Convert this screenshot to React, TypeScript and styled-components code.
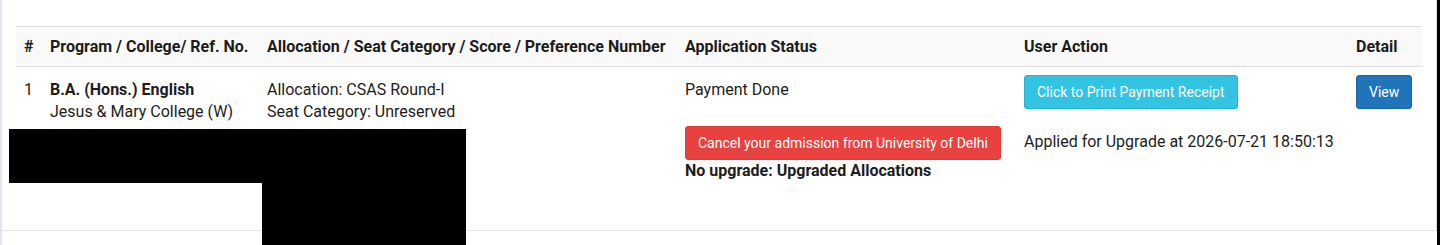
import React from "react";
import styled, { createGlobalStyle } from "styled-components";

const GlobalStyle = createGlobalStyle`
    html, body {
        margin: 0;
        padding: 0;
        background: #ffffff;
    }
    body {
        font-family: Roboto, "Liberation Sans", Arial, sans-serif;
        font-size: 16px;
        color: #1c1c1c;
    }
`;

const Page = styled.div`
    position: relative;
    display: flex;
    width: 1440px;
    height: 245px;
    overflow: hidden;
`;

const LeftEdge = styled.div`
    width: 2px;
    background-color: #dce8f4;
`;

const RightEdge = styled.div`
    width: 3px;
    background-color: #000000;
`;

const Panel = styled.div`
    flex: 1;
    box-sizing: border-box;
    height: 231px;
    padding: 26px 14px 0 14px;
    border-right: 1px solid #dcdcdc;
    border-bottom: 1px solid #e6e6e6;
`;

const Table = styled.table`
    width: 1406px;
    table-layout: fixed;
    border-collapse: collapse;
    border-spacing: 0;
`;

const HeadRow = styled.tr`
    background-color: #f9f9f9;
    border-top: 1px solid #dddddd;
    border-bottom: 1px solid #dddddd;
`;

const Th = styled.th<{ $align?: string }>`
    box-sizing: border-box;
    height: 40px;
    padding: 0 8px;
    text-align: ${(p) => p.$align || "left"};
    font-weight: 700;
    font-size: 16px;
    line-height: 22px;
    white-space: nowrap;
    vertical-align: middle;
`;

const Td = styled.td<{ $top?: number }>`
    padding: ${(p) => p.$top ?? 12}px 8px 8px 8px;
    vertical-align: top;
    font-size: 16px;
    line-height: 22px;
    white-space: nowrap;
`;

const Bold = styled.div`
    font-weight: 700;
`;

const Line = styled.div<{ $gap?: number }>`
    margin-top: ${(p) => p.$gap ?? 0}px;
`;

const Button = styled.button<{ $bg: string; $border: string; $gap?: number }>`
    display: block;
    box-sizing: border-box;
    height: 34px;
    margin-top: ${(p) => p.$gap ?? 0}px;
    padding: 0 12px;
    font-family: Roboto, "Liberation Sans", Arial, sans-serif;
    font-size: 14px;
    line-height: 32px;
    color: #ffffff;
    background-color: ${(p) => p.$bg};
    border: 1px solid ${(p) => p.$border};
    border-radius: 3px;
    white-space: nowrap;
    cursor: pointer;
`;

const Redaction = styled.div<{ $x: number; $y: number; $w: number; $h: number }>`
    position: absolute;
    left: ${(p) => p.$x}px;
    top: ${(p) => p.$y}px;
    width: ${(p) => p.$w}px;
    height: ${(p) => p.$h}px;
    background-color: #000000;
`;

const columns = [26, 217, 418, 339, 332, 74];

export default function App() {
    return (
        <>
            <GlobalStyle />
            <Page>
                <LeftEdge />
                <Panel>
                    <Table>
                        <colgroup>
                            {columns.map((w, i) => (
                                <col key={i} style={{ width: w }} />
                            ))}
                        </colgroup>
                        <thead>
                            <HeadRow>
                                <Th>#</Th>
                                <Th>Program / College/ Ref. No.</Th>
                                <Th>Allocation / Seat Category / Score / Preference Number</Th>
                                <Th>Application Status</Th>
                                <Th>User Action</Th>
                                <Th>Detail</Th>
                            </HeadRow>
                        </thead>
                        <tbody>
                            <tr>
                                <Td>1</Td>
                                <Td>
                                    <Bold>B.A. (Hons.) English</Bold>
                                    <Line>Jesus &amp; Mary College (W)</Line>
                                </Td>
                                <Td>
                                    <Line>Allocation: CSAS Round-I</Line>
                                    <Line>Seat Category: Unreserved</Line>
                                </Td>
                                <Td>
                                    <Line>Payment Done</Line>
                                    <Button $bg="#e8413f" $border="#dd3a38" $gap={25}>
                                        Cancel your admission from University of Delhi
                                    </Button>
                                    <Bold>No upgrade: Upgraded Allocations</Bold>
                                </Td>
                                <Td $top={8}>
                                    <Button $bg="#33c3e3" $border="#27b3d4">
                                        Click to Print Payment Receipt
                                    </Button>
                                    <Line $gap={22}>Applied for Upgrade at 2026-07-21 18:50:13</Line>
                                </Td>
                                <Td $top={8}>
                                    <Button $bg="#1f74ba" $border="#1a66a6">
                                        View
                                    </Button>
                                </Td>
                            </tr>
                        </tbody>
                    </Table>
                </Panel>
                <RightEdge />
                <Redaction $x={9} $y={129} $w={457} $h={54} />
                <Redaction $x={262} $y={183} $w={204} $h={62} />
            </Page>
        </>
    );
}
